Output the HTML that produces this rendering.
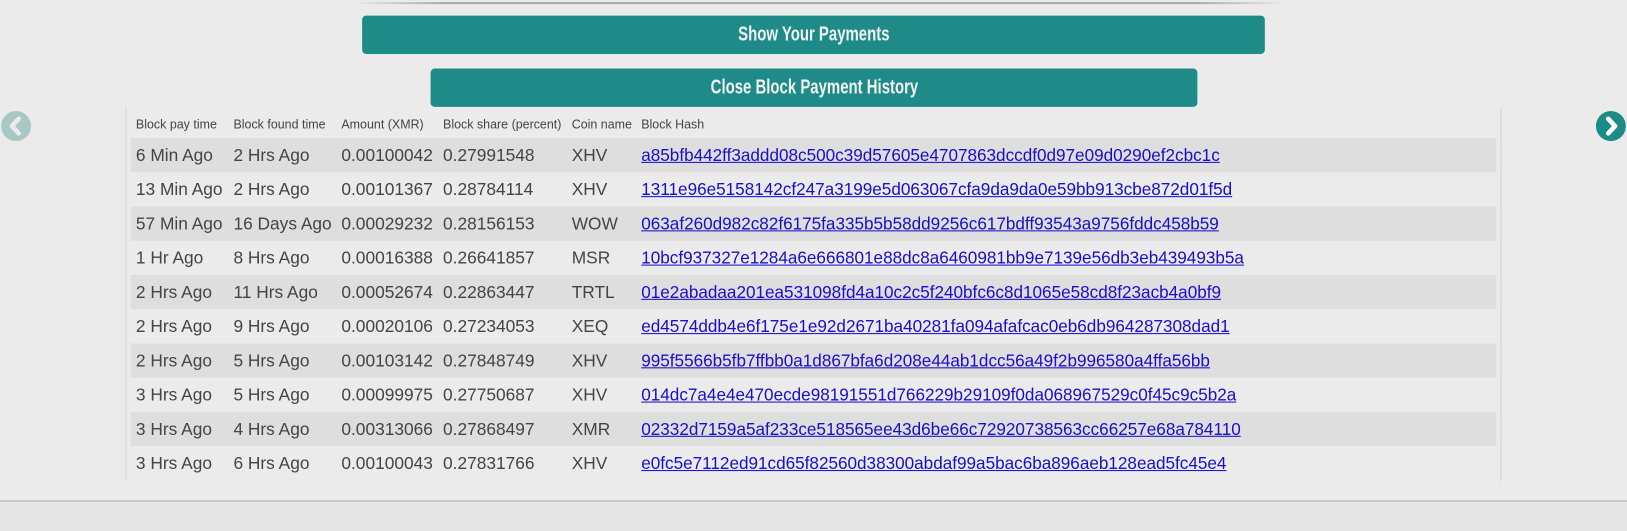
<!DOCTYPE html>
<html><head><meta charset="utf-8"><style>
html,body{margin:0;width:1627px;height:512px;overflow:hidden;background:#ebebeb}
#w{position:absolute;left:0;top:0;width:1568px;height:494px;transform:scale(1.0376);transform-origin:0 0;font-family:"Liberation Sans",sans-serif}
.topline{position:absolute;left:340px;top:2px;width:900px;height:2px;background:linear-gradient(90deg,rgba(160,160,160,0),#a8a8a8 10%,#a8a8a8 90%,rgba(160,160,160,0))}
.btn{position:absolute;background:#1f8b88;border-radius:4px;color:#f2f2f2;text-align:center;font-weight:bold;font-size:20px}
.btn span{display:inline-block;transform:scaleX(0.72);transform-origin:center;white-space:nowrap}
.vl{position:absolute;top:104px;height:360px;width:1px;background:#d4d4d4}
.row{position:absolute;left:126px;width:1316px;height:33px;font-size:16.7px;color:#444}
.row.a{background:#dedede}
.row div,.hd div{position:absolute;top:7px;white-space:nowrap}
.row .c6{font-size:16.5px;top:8px}
.hd{position:absolute;left:126px;top:104px;width:1316px;height:29px;font-size:12px;color:#444}
.hd div{top:9px}
a{color:#1a0dcc;text-decoration:underline}
.c1{left:5px}.c2{left:99px}.c3{left:203px}.c4{left:301px}.c5{left:425px}.c6{left:492px}
.circ{position:absolute;width:29px;height:29px;border-radius:50%}
.bot{position:absolute;left:0;top:482px;width:1627px;height:2px;background:#c8c8c8}
.botf{position:absolute;left:0;top:484px;width:1627px;height:28px;background:#e6e6e6}
</style></head><body><div id="w">
<div class="topline"></div>
<div class="btn" style="left:349px;top:15px;width:870px;height:37px;line-height:37px"><span>Show Your Payments</span></div>
<div class="btn" style="left:415px;top:66px;width:739px;height:37px;line-height:37px"><span>Close Block Payment History</span></div>
<div class="vl" style="left:121px"></div>
<div class="vl" style="left:1446px"></div>
<svg class="circ" style="left:1px;top:107px" viewBox="0 0 29 29"><circle cx="14.5" cy="14.5" r="14.5" fill="#a9c8c5"/><path d="M17 7.5 L10.5 14.5 L17 21.5" stroke="#ebebeb" stroke-width="4.5" fill="none" stroke-linecap="round" stroke-linejoin="round"/></svg>
<svg class="circ" style="left:1538px;top:107px" viewBox="0 0 29 29"><circle cx="14.5" cy="14.5" r="14.5" fill="#1f8b88"/><path d="M12 7.5 L18.5 14.5 L12 21.5" stroke="#fff" stroke-width="4.5" fill="none" stroke-linecap="round" stroke-linejoin="round"/></svg>
<div class="hd"><div class="c1">Block pay time</div><div class="c2">Block found time</div><div class="c3">Amount (XMR)</div><div class="c4">Block share (percent)</div><div class="c5">Coin name</div><div class="c6">Block Hash</div></div>
<div class="row a" style="top:133px"><div class="c1">6 Min Ago</div><div class="c2">2 Hrs Ago</div><div class="c3">0.00100042</div><div class="c4">0.27991548</div><div class="c5">XHV</div><div class="c6"><a>a85bfb442ff3addd08c500c39d57605e4707863dccdf0d97e09d0290ef2cbc1c</a></div></div>
<div class="row" style="top:166px"><div class="c1">13 Min Ago</div><div class="c2">2 Hrs Ago</div><div class="c3">0.00101367</div><div class="c4">0.28784114</div><div class="c5">XHV</div><div class="c6"><a>1311e96e5158142cf247a3199e5d063067cfa9da9da0e59bb913cbe872d01f5d</a></div></div>
<div class="row a" style="top:199px"><div class="c1">57 Min Ago</div><div class="c2">16 Days Ago</div><div class="c3">0.00029232</div><div class="c4">0.28156153</div><div class="c5">WOW</div><div class="c6"><a>063af260d982c82f6175fa335b5b58dd9256c617bdff93543a9756fddc458b59</a></div></div>
<div class="row" style="top:232px"><div class="c1">1 Hr Ago</div><div class="c2">8 Hrs Ago</div><div class="c3">0.00016388</div><div class="c4">0.26641857</div><div class="c5">MSR</div><div class="c6"><a>10bcf937327e1284a6e666801e88dc8a6460981bb9e7139e56db3eb439493b5a</a></div></div>
<div class="row a" style="top:265px"><div class="c1">2 Hrs Ago</div><div class="c2">11 Hrs Ago</div><div class="c3">0.00052674</div><div class="c4">0.22863447</div><div class="c5">TRTL</div><div class="c6"><a>01e2abadaa201ea531098fd4a10c2c5f240bfc6c8d1065e58cd8f23acb4a0bf9</a></div></div>
<div class="row" style="top:298px"><div class="c1">2 Hrs Ago</div><div class="c2">9 Hrs Ago</div><div class="c3">0.00020106</div><div class="c4">0.27234053</div><div class="c5">XEQ</div><div class="c6"><a>ed4574ddb4e6f175e1e92d2671ba40281fa094afafcac0eb6db964287308dad1</a></div></div>
<div class="row a" style="top:331px"><div class="c1">2 Hrs Ago</div><div class="c2">5 Hrs Ago</div><div class="c3">0.00103142</div><div class="c4">0.27848749</div><div class="c5">XHV</div><div class="c6"><a>995f5566b5fb7ffbb0a1d867bfa6d208e44ab1dcc56a49f2b996580a4ffa56bb</a></div></div>
<div class="row" style="top:364px"><div class="c1">3 Hrs Ago</div><div class="c2">5 Hrs Ago</div><div class="c3">0.00099975</div><div class="c4">0.27750687</div><div class="c5">XHV</div><div class="c6"><a>014dc7a4e4e470ecde98191551d766229b29109f0da068967529c0f45c9c5b2a</a></div></div>
<div class="row a" style="top:397px"><div class="c1">3 Hrs Ago</div><div class="c2">4 Hrs Ago</div><div class="c3">0.00313066</div><div class="c4">0.27868497</div><div class="c5">XMR</div><div class="c6"><a>02332d7159a5af233ce518565ee43d6be66c72920738563cc66257e68a784110</a></div></div>
<div class="row" style="top:430px"><div class="c1">3 Hrs Ago</div><div class="c2">6 Hrs Ago</div><div class="c3">0.00100043</div><div class="c4">0.27831766</div><div class="c5">XHV</div><div class="c6"><a>e0fc5e7112ed91cd65f82560d38300abdaf99a5bac6ba896aeb128ead5fc45e4</a></div></div>
<div class="bot"></div><div class="botf"></div>
</div></body></html>
